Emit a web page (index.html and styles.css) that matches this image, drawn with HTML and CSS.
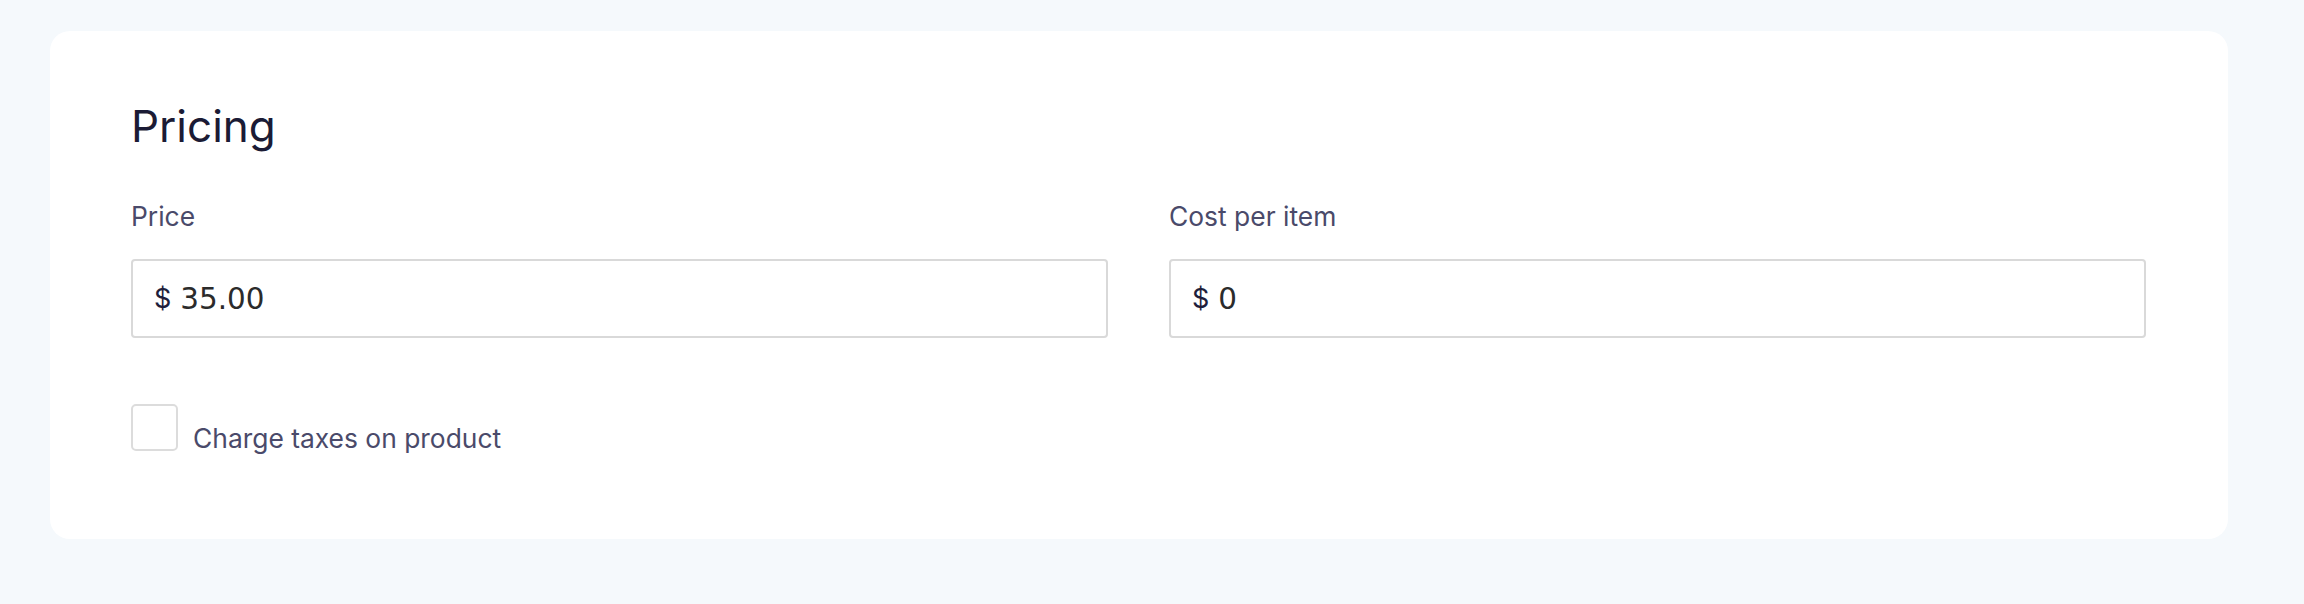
FILE: index.html
```html
<!DOCTYPE html>
<html lang="en">
<head>
<meta charset="utf-8">
<title>Pricing</title>
<link rel="stylesheet" href="styles.css">
</head>
<body>
  <section class="card">
    <h2 class="card-title">Pricing</h2>
    <div class="fields">
      <div class="field">
        <label class="field-label" for="price">Price</label>
        <div class="money-input">
          <span class="currency">$</span>
          <input id="price" class="money-value" type="text" value="35.00">
        </div>
      </div>
      <div class="field">
        <label class="field-label" for="cost">Cost per item</label>
        <div class="money-input">
          <span class="currency">$</span>
          <input id="cost" class="money-value" type="text" value="0">
        </div>
      </div>
    </div>
    <label class="check-row">
      <span class="check-box"></span>
      <span class="check-label">Charge taxes on product</span>
    </label>
  </section>
</body>
</html>
```

FILE: styles.css
```css
html, body {
  margin: 0;
  padding: 0;
}

body {
  background: #f5f9fc;
  padding: 31px 76px 65px 50px;
  font-family: Inter, "Noto Sans", sans-serif;
}

.card {
  background: #ffffff;
  border-radius: 20px;
  padding: 68px 82px 88px 81px;
}

.card-title {
  margin: 0;
  font-size: 44px;
  line-height: 54px;
  font-weight: 400;
  color: #1b1b35;
}

.fields {
  display: grid;
  grid-template-columns: 1fr 1fr;
  column-gap: 61px;
  margin-top: 47px;
}

.field {
  display: flex;
  flex-direction: column;
}

.field-label {
  font-size: 26.4px;
  line-height: 32px;
  color: #4a4a6a;
  margin-bottom: 27px;
}

.money-input {
  display: flex;
  align-items: center;
  height: 79px;
  box-sizing: border-box;
  border: 2px solid #d9d9d9;
  border-radius: 4px;
  padding: 0 21px;
  background: #ffffff;
}

.currency {
  font-size: 27px;
  color: #1e1e3c;
  margin-right: 9px;
}

.money-value {
  flex: 1;
  min-width: 0;
  border: none;
  outline: none;
  padding: 0;
  margin: 0;
  background: transparent;
  font-family: "DejaVu Sans", sans-serif;
  font-size: 29.4px;
  color: #2b2b2b;
}

.check-row {
  display: flex;
  align-items: flex-end;
  margin-top: 66px;
}

.check-box {
  width: 47px;
  height: 47px;
  box-sizing: border-box;
  border: 2px solid #dcdcdc;
  border-radius: 5px;
  margin-right: 15px;
  flex: none;
}

.check-label {
  font-size: 26.4px;
  line-height: 26px;
  color: #4a4a6a;
}
```
